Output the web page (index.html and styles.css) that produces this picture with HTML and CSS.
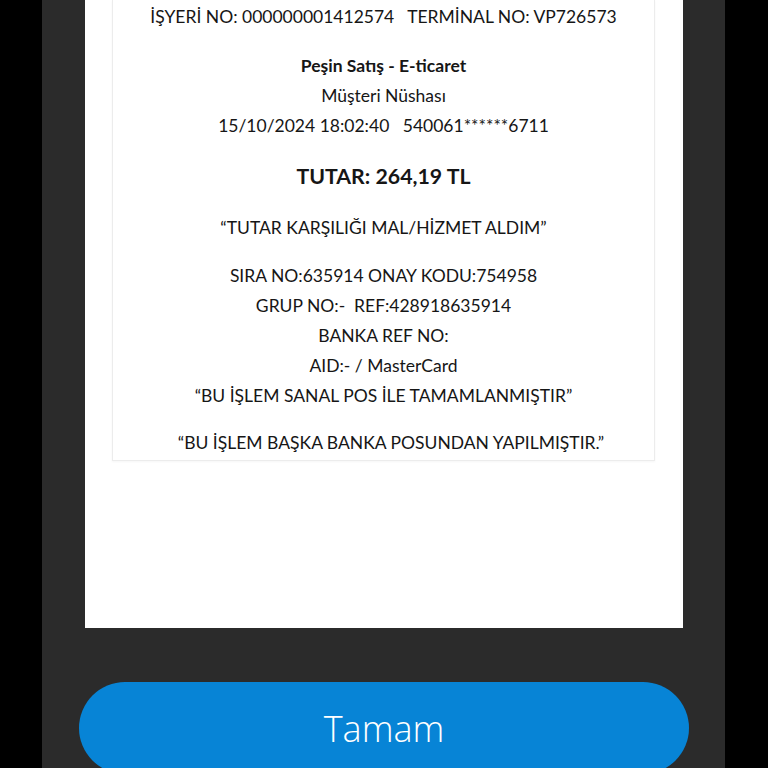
FILE: index.html
```html
<!DOCTYPE html>
<html lang="tr">
<head>
<meta charset="utf-8">
<link rel="stylesheet" href="styles.css">
</head>
<body>
<div class="frame">
  <div class="card">
    <div class="receipt">
      <p class="line l-first">İŞYERİ NO: 000000001412574&nbsp;&nbsp; TERMİNAL NO: VP726573</p>
      <p class="line bold l-gap">Peşin Satış - E-ticaret</p>
      <p class="line">Müşteri Nüshası</p>
      <p class="line">15/10/2024 18:02:40&nbsp;&nbsp; 540061******6711</p>
      <p class="line total">TUTAR: 264,19 TL</p>
      <p class="line l-quote">“TUTAR KARŞILIĞI MAL/HİZMET ALDIM”</p>
      <p class="line l-gap2">SIRA NO:635914 ONAY KODU:754958</p>
      <p class="line">GRUP NO:-&nbsp; REF:428918635914</p>
      <p class="line">BANKA REF NO:</p>
      <p class="line">AID:- / MasterCard</p>
      <p class="line">“BU İŞLEM SANAL POS İLE TAMAMLANMIŞTIR”</p>
      <p class="line l-last">“BU İŞLEM BAŞKA BANKA POSUNDAN YAPILMIŞTIR.”</p>
    </div>
  </div>
  <button class="btn">Tamam</button>
</div>
</body>
</html>
```

FILE: styles.css
```css
html, body {
  margin: 0;
  padding: 0;
  background: #000;
  height: 768px;
  overflow: hidden;
}
.frame {
  margin-left: 42px;
  width: 683px;
  height: 768px;
  background: #2b2b2b;
  display: flex;
  flex-direction: column;
}
.card {
  flex-shrink: 0;
  margin-left: 43px;
  width: 598px;
  height: 628px;
  background: #fff;
  display: flex;
  flex-direction: column;
}
.receipt {
  flex-shrink: 0;
  margin-left: 27px;
  width: 541px;
  height: 460px;
  border: 1px solid #ececec;
  border-top: none;
  box-shadow: 0 1px 2px rgba(0,0,0,0.04);
  display: flex;
  flex-direction: column;
  align-items: center;
  font-family: Lato, "Liberation Sans", sans-serif;
  font-size: 17.5px;
  color: #161616;
}
.line {
  flex-shrink: 0;
  margin: 0;
  height: 30px;
  line-height: 30px;
  white-space: nowrap;
}
.l-first { margin-top: 2px; }
.bold { font-weight: 700; }
.l-gap { margin-top: 19px; }
.total {
  font-weight: 700;
  font-size: 21.3px;
  margin-top: 20px;
}
.l-quote { margin-top: 22px; }
.l-gap2 { margin-top: 18px; }
.l-last { margin-top: 17px; padding-left: 15px; }
.btn {
  flex-shrink: 0;
  margin-top: 54px;
  margin-left: 37px;
  width: 610px;
  height: 92px;
  border: none;
  border-radius: 46px;
  background: #0784d6;
  color: #fff;
  font-family: "Open Sans", "Noto Sans", sans-serif;
  font-weight: 300;
  font-size: 36px;
  padding: 2px 0 0 0;
  line-height: 1;
}
```
